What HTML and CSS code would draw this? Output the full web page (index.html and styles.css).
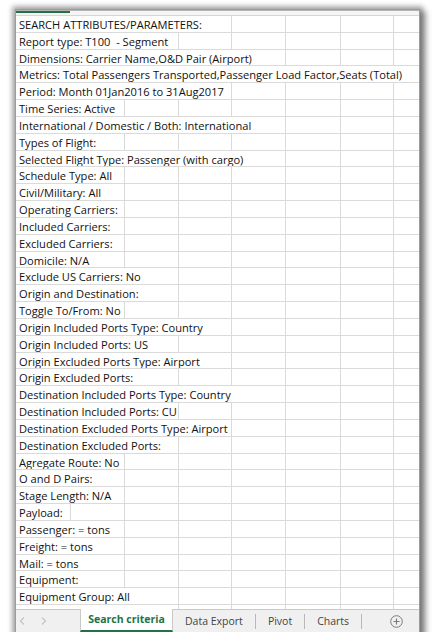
FILE: index.html
```html
<!DOCTYPE html>
<html lang="en">
<head>
  <meta charset="UTF-8" />
  <meta name="viewport" content="width=device-width, initial-scale=1.0" />
  <title>Search criteria</title>
  <link rel="stylesheet" href="styles.css">
</head>
<body>
  <div class="sheet">
    <!-- bas de l'en-tête de colonnes, colonne A sélectionnée -->
    <div class="col-head">
      <div class="sel"></div>
    </div>

    <div class="cells">
      <div class="row"><div class="cell s4">SEARCH ATTRIBUTES/PARAMETERS:</div></div>
      <div class="row"><div class="cell s3">Report type: T100&nbsp; - Segment</div></div>
      <div class="row"><div class="cell s5">Dimensions: Carrier Name,O&amp;D Pair (Airport)</div></div>
      <div class="row"><div class="cell s8">Metrics: Total Passengers Transported,Passenger Load Factor,Seats (Total)</div></div>
      <div class="row"><div class="cell s4">Period: Month 01Jan2016 to 31Aug2017</div></div>
      <div class="row"><div class="cell s2">Time Series: Active</div></div>
      <div class="row"><div class="cell s5">International / Domestic / Both: International</div></div>
      <div class="row"><div class="cell s2">Types of Flight:</div></div>
      <div class="row"><div class="cell s5">Selected Flight Type: Passenger (with cargo)</div></div>
      <div class="row"><div class="cell s2">Schedule Type: All</div></div>
      <div class="row"><div class="cell s2">Civil/Military: All</div></div>
      <div class="row"><div class="cell s2">Operating Carriers:</div></div>
      <div class="row"><div class="cell s2">Included Carriers:</div></div>
      <div class="row"><div class="cell s2">Excluded Carriers:</div></div>
      <div class="row"><div class="cell s2">Domicile: N/A</div></div>
      <div class="row"><div class="cell s3">Exclude US Carriers: No</div></div>
      <div class="row"><div class="cell s3">Origin and Destination:</div></div>
      <div class="row"><div class="cell s2">Toggle To/From: No</div></div>
      <div class="row"><div class="cell s4">Origin Included Ports Type: Country</div></div>
      <div class="row"><div class="cell s3">Origin Included Ports: US</div></div>
      <div class="row"><div class="cell s4">Origin Excluded Ports Type: Airport</div></div>
      <div class="row"><div class="cell s3">Origin Excluded Ports:</div></div>
      <div class="row"><div class="cell s5">Destination Included Ports Type: Country</div></div>
      <div class="row"><div class="cell s3">Destination Included Ports: CU</div></div>
      <div class="row"><div class="cell s4">Destination Excluded Ports Type: Airport</div></div>
      <div class="row"><div class="cell s3">Destination Excluded Ports:</div></div>
      <div class="row"><div class="cell s2">Agregate Route: No</div></div>
      <div class="row"><div class="cell s2">O and D Pairs:</div></div>
      <div class="row"><div class="cell s2">Stage Length: N/A</div></div>
      <div class="row"><div class="cell s1">Payload:</div></div>
      <div class="row"><div class="cell s2">Passenger: = tons</div></div>
      <div class="row"><div class="cell s2">Freight: = tons</div></div>
      <div class="row"><div class="cell s2">Mail: = tons</div></div>
      <div class="row"><div class="cell s2">Equipment:</div></div>
      <div class="row"><div class="cell s3">Equipment Group: All</div></div>
      <div class="row"><div class="cell s3">Equipment Configuration: All</div></div>
    </div>

    <div class="tabs">
      <div class="nav">
        <svg width="6" height="8" viewBox="0 0 6 8"><path d="M5 0.5 L1.5 4 L5 7.5" fill="none" stroke="#c4c4c4" stroke-width="1.2"/></svg>
        <svg width="6" height="8" viewBox="0 0 6 8"><path d="M1 0.5 L4.5 4 L1 7.5" fill="none" stroke="#c4c4c4" stroke-width="1.2"/></svg>
      </div>
      <div class="tab active">Search criteria</div>
      <div class="tab">Data Export</div>
      <div class="tab">Pivot</div>
      <div class="tab">Charts</div>
      <div class="add">
        <svg width="13" height="13" viewBox="0 0 13 13">
          <circle cx="6.5" cy="6.5" r="5.8" fill="none" stroke="#7a7a7a" stroke-width="1"/>
          <path d="M6.5 3.5 V9.5 M3.5 6.5 H9.5" stroke="#7a7a7a" stroke-width="1.1"/>
        </svg>
      </div>
    </div>
  </div>
</body>
</html>
```

FILE: styles.css
```css
body {
  margin: 0;
  background: #fff;
  font-family: 'Open Sans', 'Liberation Sans', sans-serif;
}

.sheet {
  margin: 10px 0 0 16px;
  width: 403px;
  height: 622px;
  display: flex;
  flex-direction: column;
  background: #fff;
  box-shadow:
    0 0 0 1px #9c9c9c,
    0 0 5px 4px rgba(0, 0, 0, 0.3),
    4px 4px 6px 3px rgba(0, 0, 0, 0.35);
}

/* En-tête de colonnes (seulement le bas est visible) */
.col-head {
  height: 6px;
  flex: none;
  box-sizing: border-box;
  border-top: 1px solid #b4b4b4;
  border-bottom: 1px solid #d6d6d6;
  background: #f5f5f5;
}

.col-head .sel {
  width: 54px;
  height: 2px;
  background: #217346;
}

/* Grille */
.cells {
  flex: 1;
  overflow: hidden;
  background-color: #fff;
  background-image:
    linear-gradient(#dadada, #dadada),
    linear-gradient(#dadada, #dadada),
    linear-gradient(#dadada, #dadada),
    linear-gradient(#dadada, #dadada),
    linear-gradient(#dadada, #dadada),
    linear-gradient(#dadada, #dadada),
    linear-gradient(#dadada, #dadada);
  background-size: 1px 100%;
  background-repeat: no-repeat;
  background-position: 54px 0, 108px 0, 162px 0, 215px 0, 269px 0, 324px 0, 377px 0;
}

.row {
  display: grid;
  grid-template-columns: 55px 54px 54px 53px 54px 55px 53px 25px;
  height: 16.83px;
  box-sizing: border-box;
  border-bottom: 1px solid #dadada;
}

.cell {
  background: #fff;
  border-right: 1px solid #dadada;
  padding-left: 3px;
  white-space: nowrap;
  overflow: hidden;
  font-size: 11.1px;
  line-height: 17px;
  color: #111;
}

.s1 { grid-column: span 1; }
.s2 { grid-column: span 2; }
.s3 { grid-column: span 3; }
.s4 { grid-column: span 4; }
.s5 { grid-column: span 5; }
.s8 { grid-column: span 8; border-right: none; }

/* Onglets */
.tabs {
  flex: none;
  height: 22px;
  display: flex;
  align-items: center;
  background: #f0f0f0;
  border-top: 1px solid #c9c9c9;
}

.nav {
  width: 64px;
  display: flex;
  gap: 16px;
  padding-left: 3px;
  box-sizing: border-box;
}

.tab {
  height: 15px;
  line-height: 15px;
  padding: 0 12px;
  font-size: 10.5px;
  color: #444;
  border-right: 1px solid #b8b8b8;
}

.tab.active {
  height: 23px;
  width: 93px;
  box-sizing: border-box;
  padding: 0;
  margin-top: -1px;
  line-height: 21px;
  text-align: center;
  background: #fff;
  color: #217346;
  font-weight: bold;
  font-size: 10.5px;
  border-left: 1px solid #c9c9c9;
  border-right: 1px solid #c9c9c9;
  border-bottom: 2px solid #217346;
}

.add {
  margin-left: 28px;
  display: flex;
}
```
